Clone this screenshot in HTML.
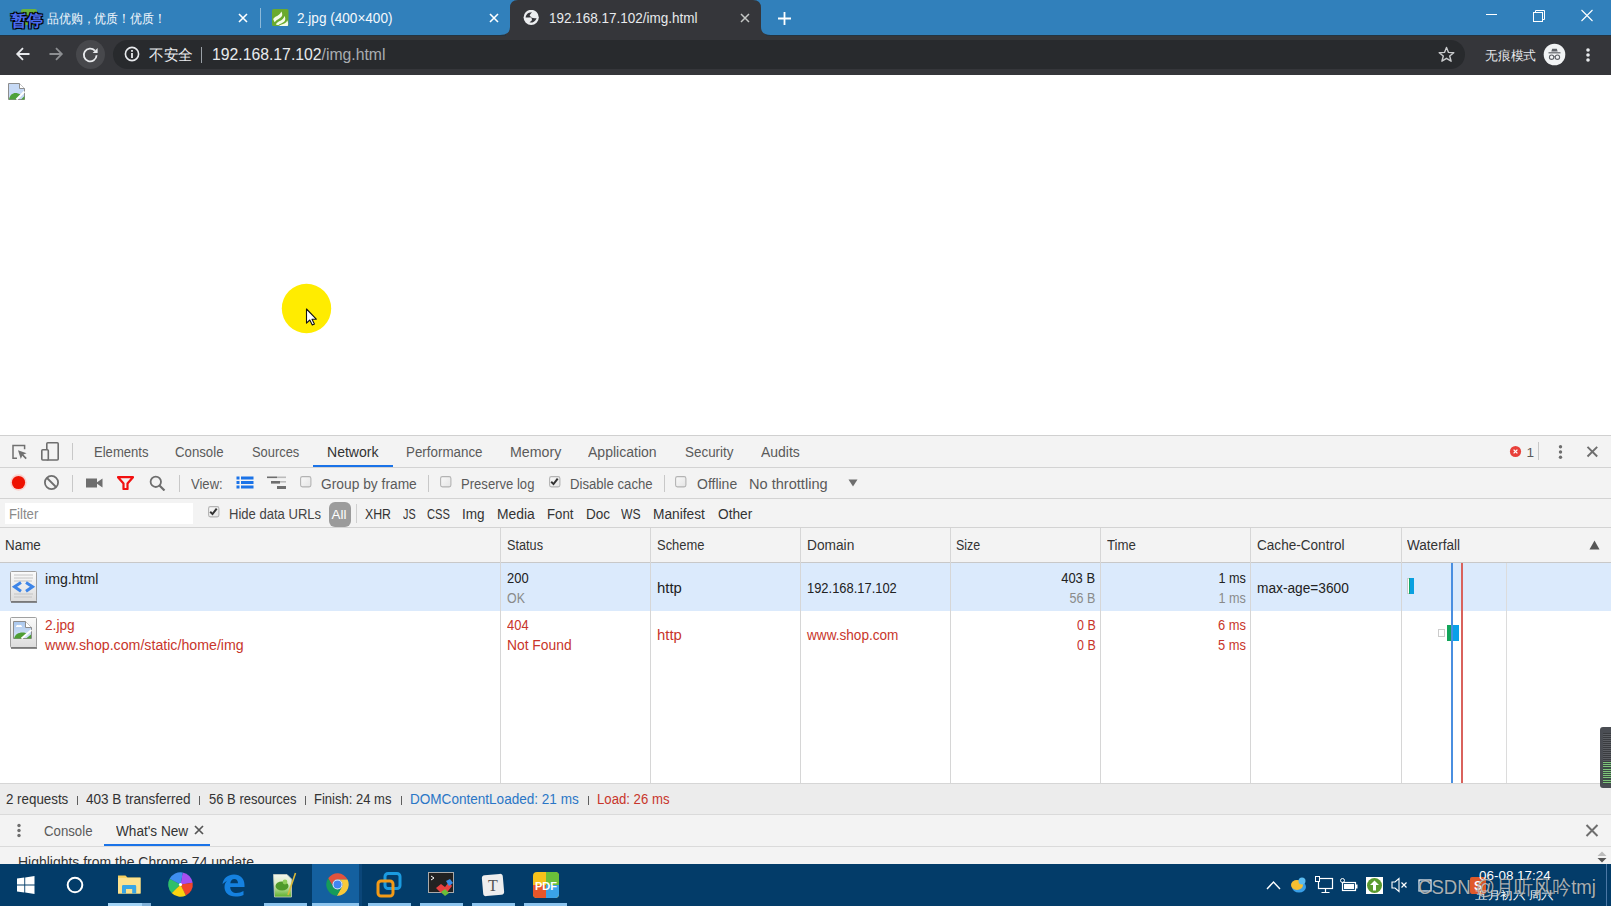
<!DOCTYPE html>
<html><head><meta charset="utf-8"><style>
html,body{margin:0;padding:0;width:1611px;height:906px;overflow:hidden;background:#fff;}
body{position:relative;font-family:"Liberation Sans",sans-serif;}
.t{position:absolute;white-space:pre;}
.r{position:absolute;display:block;}
</style></head><body>
<div class="r" style="left:0px;top:0px;width:1611px;height:35px;background:#3180bb;"></div>
<svg class="r" style="left:20px;top:8px;" width="18" height="18" viewBox="0 0 18 18"><rect x="1" y="1" width="16" height="16" rx="2" fill="#6cb33e"/></svg>
<div class="t" style="left:10.5px;top:13.26px;font-size:16px;line-height:16px;color:#4a6cf0;font-weight:bold;text-shadow:-1px -1px 0 #000,1px -1px 0 #000,-1px 1px 0 #000,1px 1px 0 #000,0 0 2px #000;">暂停</div>
<div class="t" style="left:46.5px;top:12.30px;font-size:13px;line-height:13px;color:#f4f8fb;transform:scaleX(0.9115);transform-origin:left center;">品优购，优质！优质！</div>
<svg class="r" style="left:237px;top:12px;" width="12" height="12" viewBox="0 0 12 12"><path d="M2 2L10 10M10 2L2 10" stroke="#fff" stroke-width="1.6"/></svg>
<div class="r" style="left:260px;top:8px;width:1px;height:20px;background:rgba(255,255,255,0.45);"></div>
<svg class="r" style="left:272px;top:9px;" width="17" height="17" viewBox="0 0 17 17"><rect x="0" y="0" width="16.5" height="17" rx="1.5" fill="#6aaa2e"/><path d="M1.2 10.2C2.5 7.5 6.5 7 8.2 4.5C8.8 3.6 9 3 9.2 2.4C10.5 4 10.6 6.2 9.6 7.6C8.4 9.5 5 10.5 2.6 13.2Z" fill="#f4fbe8"/><path d="M3.8 15.6C4.8 12.8 8.5 12.2 10.8 10C11.6 9.2 12.1 8.2 12.3 7C13.6 8.7 13.7 11 12.4 12.5C10.8 14.2 7.5 14.8 6.3 16.2Z" fill="#f4fbe8"/><path d="M6.8 17C8.5 15.6 12 15 14.2 13.2C14.8 12.6 15 12 15.1 11.3C16.2 12.7 16.4 15 15.8 17Z" fill="#f4fbe8"/></svg>
<div class="t" style="left:297px;top:11.62px;font-size:13.8px;line-height:13.8px;color:#f4f8fb;transform:scaleX(0.9841);transform-origin:left center;">2.jpg (400×400)</div>
<svg class="r" style="left:488px;top:12px;" width="12" height="12" viewBox="0 0 12 12"><path d="M2 2L10 10M10 2L2 10" stroke="#fff" stroke-width="1.6"/></svg>
<svg class="r" style="left:500px;top:0px;" width="272" height="35" viewBox="0 0 272 35"><path d="M0 35 Q10 35 10 27 L10 8 Q10 0 18 0 L253 0 Q261 0 261 8 L261 27 Q261 35 271 35 Z" fill="#35363a"/></svg>
<svg class="r" style="left:523px;top:10px;" width="16" height="16" viewBox="0 0 16 16"><circle cx="8.2" cy="7.4" r="7.6" fill="#eceef0"/><path d="M2.6 7.6C2.8 5.5 4 3.6 6 2.8C7 2.4 8 2.2 9 2.2C8 3.2 7.2 4 6.8 5C6.5 6 7.4 6.8 8.8 7.3C7 7.5 4.8 7.6 2.6 7.6Z" fill="#35363a"/><path d="M7.6 7.2C9 7.8 10.8 8.3 13.6 8.3C13 10 11.5 11.8 9.4 12.5C8.4 12.7 7.3 12.6 6.5 12.3C7.5 11.6 8.5 10.9 8.9 9.9C9.2 9 8.5 8 7.6 7.2Z" fill="#35363a"/></svg>
<div class="t" style="left:548.5px;top:11.62px;font-size:13.8px;line-height:13.8px;color:#e8eaed;transform:scaleX(0.9778);transform-origin:left center;">192.168.17.102/img.html</div>
<svg class="r" style="left:739px;top:12px;" width="12" height="12" viewBox="0 0 12 12"><path d="M2 2L10 10M10 2L2 10" stroke="#c4c7c5" stroke-width="1.5"/></svg>
<svg class="r" style="left:777px;top:11px;" width="15" height="15" viewBox="0 0 15 15"><path d="M7.5 1V14M1 7.5H14" stroke="#fff" stroke-width="1.8"/></svg>
<div class="r" style="left:1486px;top:14px;width:11px;height:1px;background:#fff;"></div>
<svg class="r" style="left:1532px;top:9px;" width="14" height="13" viewBox="0 0 14 13"><rect x="1.5" y="3.5" width="9" height="9" fill="none" stroke="#fff" stroke-width="1"/><path d="M3.5 3.5V1.5H12.5V10.5H10.5" fill="none" stroke="#fff" stroke-width="1"/></svg>
<svg class="r" style="left:1580px;top:9px;" width="14" height="13" viewBox="0 0 14 13"><path d="M1.5 1L12.5 12M12.5 1L1.5 12" stroke="#fff" stroke-width="1.1"/></svg>
<div class="r" style="left:0px;top:35px;width:1611px;height:40px;background:#35363a;"></div>
<svg class="r" style="left:15px;top:46px;" width="16" height="16" viewBox="0 0 16 16"><path d="M14.5 8H2.5M8 2.2L2.2 8L8 13.8" fill="none" stroke="#e8eaed" stroke-width="1.8"/></svg>
<svg class="r" style="left:48px;top:46px;" width="16" height="16" viewBox="0 0 16 16"><path d="M1.5 8H13.5M8 2.2L13.8 8L8 13.8" fill="none" stroke="#8d8f92" stroke-width="1.8"/></svg>
<svg class="r" style="left:76px;top:39.5px;" width="30" height="30" viewBox="0 0 30 30"><circle cx="14.5" cy="14.5" r="14.5" fill="#47484c"/><path d="M18.9 10.6A6.4 6.4 0 1 0 20.6 15.3" fill="none" stroke="#e8eaed" stroke-width="1.8"/><path d="M21.6 8V13H16.6Z" fill="#e8eaed"/></svg>
<div class="r" style="left:113px;top:40px;width:1352px;height:29px;background:#282a2d;border-radius:14.5px;"></div>
<div class="r" style="left:0px;top:35px;width:506px;height:1px;background:#243441;"></div>
<div class="r" style="left:766px;top:35px;width:845px;height:1px;background:#243441;"></div>
<svg class="r" style="left:124px;top:46px;" width="16" height="16" viewBox="0 0 16 16"><circle cx="8" cy="8" r="6.6" fill="none" stroke="#e8eaed" stroke-width="1.6"/><rect x="7.1" y="7" width="1.8" height="5" fill="#e8eaed"/><rect x="7.1" y="4" width="1.8" height="1.8" fill="#e8eaed"/></svg>
<div class="t" style="left:148.5px;top:48.44px;font-size:14.6px;line-height:14.6px;color:#e8eaed;transform:scaleX(0.9778);transform-origin:left center;">不安全</div>
<div class="r" style="left:201px;top:47px;width:1px;height:16px;background:#9aa0a6;"></div>
<div class="t" style="left:212px;top:47.06px;font-size:16px;line-height:16px;color:#e8eaed;transform:scaleX(0.9851);transform-origin:left center;">192.168.17.102<span style="color:#a9adb1">/img.html</span></div>
<svg class="r" style="left:1438px;top:46px;" width="17" height="17" viewBox="0 0 17 17"><path d="M8.5 1.5L10.5 6.4L15.8 6.7L11.7 10L13.1 15.2L8.5 12.3L3.9 15.2L5.3 10L1.2 6.7L6.5 6.4Z" fill="none" stroke="#c9cbcd" stroke-width="1.4" stroke-linejoin="round"/></svg>
<div class="t" style="left:1484.5px;top:49.96px;font-size:12.8px;line-height:12.8px;color:#e8eaed;transform:scaleX(0.9808);transform-origin:left center;">无痕模式</div>
<svg class="r" style="left:1543px;top:43px;" width="23" height="23" viewBox="0 0 23 23"><circle cx="11.5" cy="11.5" r="10.8" fill="#f1f3f4"/><path d="M8.3 8.6L9.2 5.8H13.8L14.7 8.6Z" fill="#5f6368"/><rect x="5.5" y="9.2" width="12" height="1.2" fill="#5f6368"/><circle cx="8.6" cy="14.2" r="2.2" fill="none" stroke="#5f6368" stroke-width="1.1"/><circle cx="14.4" cy="14.2" r="2.2" fill="none" stroke="#5f6368" stroke-width="1.1"/><path d="M10.8 14Q11.5 13.4 12.2 14" fill="none" stroke="#5f6368" stroke-width="1"/></svg>
<svg class="r" style="left:1585px;top:47px;" width="6" height="16" viewBox="0 0 6 16"><circle cx="3" cy="3" r="1.8" fill="#e8eaed"/><circle cx="3" cy="8" r="1.8" fill="#e8eaed"/><circle cx="3" cy="13" r="1.8" fill="#e8eaed"/></svg>
<div class="r" style="left:0px;top:75px;width:1611px;height:361px;background:#fff;"></div>
<svg class="r" style="left:8px;top:83px;" width="18" height="18" viewBox="0 0 18 18"><path d="M0.5 0.5H11.5L16.5 5.5V16.5H0.5Z" fill="#c6d9f5" stroke="#8d8d8d"/><path d="M1 16.5C2 11 6 9 10 10.5L13 11.5L8 16.5Z" fill="#4ea13a"/><path d="M8.5 16.5L16.5 8.5" stroke="#fff" stroke-width="2"/><path d="M13 16.5L16.5 13V16.5Z" fill="#4ea13a"/><path d="M11.5 0.5V5.5H16.5" fill="#fff" stroke="#8d8d8d"/></svg>
<svg class="r" style="left:281px;top:283px;" width="51" height="51" viewBox="0 0 51 51"><circle cx="25.5" cy="25.5" r="24.7" fill="#ffec00"/><path d="M25.5 26V40.2L28.8 37L31.3 42L33.4 41.1L31 36.2H35.3Z" fill="#fff" stroke="#111" stroke-width="1.1" stroke-linejoin="round"/></svg>
<div class="r" style="left:0px;top:436px;width:1611px;height:428px;background:#f3f3f3;"></div>
<div class="r" style="left:0px;top:435px;width:1611px;height:1px;background:#d0d0d0;"></div>
<div class="r" style="left:0px;top:467px;width:1611px;height:1px;background:#d3d3d3;"></div>
<svg class="r" style="left:11px;top:443px;" width="17" height="17" viewBox="0 0 17 17"><path d="M6 15.2H2V2.4H13.6V6.3" fill="none" stroke="#707070" stroke-width="1.5"/><path d="M7 7.2L15.6 10.3L12.4 11.6L15.8 15L14.6 16.2L11.2 12.8L9.8 16Z" fill="#707070"/></svg>
<svg class="r" style="left:40px;top:442px;" width="20" height="19" viewBox="0 0 20 19"><rect x="6.8" y="0.8" width="11.4" height="17.2" rx="1" fill="none" stroke="#6e6e6e" stroke-width="1.6"/><rect x="1.8" y="7.8" width="6.5" height="10.2" rx="1" fill="#f3f3f3" stroke="#6e6e6e" stroke-width="1.6"/></svg>
<div class="r" style="left:72px;top:443px;width:1px;height:17px;background:#c8c8c8;"></div>
<div class="t" style="left:93.5px;top:446.12px;font-size:13.8px;line-height:13.8px;color:#5a5a5a;transform:scaleX(0.9476);transform-origin:left center;">Elements</div>
<div class="t" style="left:175px;top:446.12px;font-size:13.8px;line-height:13.8px;color:#5a5a5a;transform:scaleX(0.9580);transform-origin:left center;">Console</div>
<div class="t" style="left:251.5px;top:446.12px;font-size:13.8px;line-height:13.8px;color:#5a5a5a;transform:scaleX(0.9343);transform-origin:left center;">Sources</div>
<div class="t" style="left:326.5px;top:446.12px;font-size:13.8px;line-height:13.8px;color:#333;transform:scaleX(1.0176);transform-origin:left center;">Network</div>
<div class="t" style="left:406px;top:446.12px;font-size:13.8px;line-height:13.8px;color:#5a5a5a;transform:scaleX(0.9685);transform-origin:left center;">Performance</div>
<div class="t" style="left:509.7px;top:446.12px;font-size:13.8px;line-height:13.8px;color:#5a5a5a;transform:scaleX(1.0295);transform-origin:left center;">Memory</div>
<div class="t" style="left:588.3px;top:446.12px;font-size:13.8px;line-height:13.8px;color:#5a5a5a;transform:scaleX(1.0163);transform-origin:left center;">Application</div>
<div class="t" style="left:684.6px;top:446.12px;font-size:13.8px;line-height:13.8px;color:#5a5a5a;transform:scaleX(0.9730);transform-origin:left center;">Security</div>
<div class="t" style="left:761.1px;top:446.12px;font-size:13.8px;line-height:13.8px;color:#5a5a5a;transform:scaleX(1.0115);transform-origin:left center;">Audits</div>
<div class="r" style="left:313px;top:465px;width:80px;height:2px;background:#1a73e8;"></div>
<svg class="r" style="left:1509px;top:445px;" width="13" height="13" viewBox="0 0 13 13"><circle cx="6.5" cy="6.5" r="5.6" fill="#e8403a"/><path d="M4.6 4.6L8.4 8.4M8.4 4.6L4.6 8.4" stroke="#fff" stroke-width="1.3"/></svg>
<div class="t" style="left:1526.5px;top:446.29px;font-size:13.6px;line-height:13.6px;color:#5a5a5a;">1</div>
<div class="r" style="left:1538px;top:442px;width:1px;height:18px;background:#c8c8c8;"></div>
<svg class="r" style="left:1557px;top:444px;" width="7" height="17" viewBox="0 0 7 17"><circle cx="3.5" cy="2.8" r="1.7" fill="#6e6e6e"/><circle cx="3.5" cy="8" r="1.7" fill="#6e6e6e"/><circle cx="3.5" cy="13.2" r="1.7" fill="#6e6e6e"/></svg>
<svg class="r" style="left:1585px;top:445px;" width="14" height="13" viewBox="0 0 14 13"><path d="M2.5 1.8L12.2 11.5M12.2 1.8L2.5 11.5" stroke="#6e6e6e" stroke-width="1.9"/></svg>
<div class="r" style="left:0px;top:498px;width:1611px;height:1px;background:#d3d3d3;"></div>
<svg class="r" style="left:10px;top:474px;" width="17" height="17" viewBox="0 0 17 17"><circle cx="8.5" cy="8.5" r="8.2" fill="#ffb0a8" opacity=".5"/><circle cx="8.5" cy="8.5" r="6.6" fill="#ee1100"/></svg>
<svg class="r" style="left:43px;top:474px;" width="17" height="17" viewBox="0 0 17 17"><circle cx="8.5" cy="8.5" r="6.6" fill="none" stroke="#6e6e6e" stroke-width="1.8"/><path d="M4 4L13 13" stroke="#6e6e6e" stroke-width="1.8"/></svg>
<div class="r" style="left:72px;top:475px;width:1px;height:17px;background:#c8c8c8;"></div>
<svg class="r" style="left:86px;top:478px;" width="17" height="10" viewBox="0 0 17 10"><rect x="0" y="0.5" width="11" height="9" fill="#6e6e6e"/><path d="M10 5L16.5 0.5V9.5Z" fill="#6e6e6e"/></svg>
<svg class="r" style="left:117px;top:476px;" width="17" height="14" viewBox="0 0 17 14"><path d="M1 1.2H16L10.5 7.5V13H6.5V7.5Z" fill="none" stroke="#f21010" stroke-width="2.2" stroke-linejoin="round"/></svg>
<svg class="r" style="left:149px;top:475px;" width="17" height="16" viewBox="0 0 17 16"><circle cx="6.8" cy="6.8" r="5.2" fill="none" stroke="#6e6e6e" stroke-width="1.8"/><path d="M10.5 10.5L15.5 15.5" stroke="#6e6e6e" stroke-width="2.2"/></svg>
<div class="r" style="left:179px;top:475px;width:1px;height:17px;background:#c8c8c8;"></div>
<div class="t" style="left:191px;top:478.42px;font-size:13.8px;line-height:13.8px;color:#5a5a5a;transform:scaleX(0.9463);transform-origin:left center;">View:</div>
<svg class="r" style="left:236px;top:476px;" width="18" height="13" viewBox="0 0 18 13"><rect x="0.5" y="0.5" width="3" height="3" fill="#1a73e8"/><rect x="5" y="0.5" width="12.5" height="3" fill="#1a73e8"/><rect x="0.5" y="5" width="3" height="3" fill="#1a73e8"/><rect x="5" y="5" width="12.5" height="3" fill="#1a73e8"/><rect x="0.5" y="9.5" width="3" height="3" fill="#1a73e8"/><rect x="5" y="9.5" width="12.5" height="3" fill="#1a73e8"/></svg>
<svg class="r" style="left:267px;top:476px;" width="20" height="14" viewBox="0 0 20 14"><rect x="0" y="0.5" width="10" height="1.6" fill="#6e6e6e"/><rect x="10" y="0.5" width="9" height="1.6" fill="#bbb"/><rect x="4" y="5" width="9" height="2.6" fill="#6e6e6e"/><rect x="13" y="5" width="6" height="1.6" fill="#bbb"/><rect x="10" y="10" width="9" height="3" fill="#6e6e6e"/></svg>
<svg class="r" style="left:300px;top:476px;" width="12" height="12" viewBox="0 0 12 12"><defs><linearGradient id="cbg" x1="0" y1="0" x2="1" y2="1"><stop offset="0" stop-color="#fafafa"/><stop offset="1" stop-color="#e4e4e4"/></linearGradient></defs><rect x="0.6" y="0.6" width="10.3" height="10.3" rx="1.8" fill="url(#cbg)" stroke="#b3b3b3" stroke-width="1.1"/></svg>
<div class="t" style="left:320.8px;top:478.42px;font-size:13.8px;line-height:13.8px;color:#5a5a5a;transform:scaleX(0.9994);transform-origin:left center;">Group by frame</div>
<div class="r" style="left:428px;top:475px;width:1px;height:17px;background:#c8c8c8;"></div>
<svg class="r" style="left:440px;top:476px;" width="12" height="12" viewBox="0 0 12 12"><defs><linearGradient id="cbg" x1="0" y1="0" x2="1" y2="1"><stop offset="0" stop-color="#fafafa"/><stop offset="1" stop-color="#e4e4e4"/></linearGradient></defs><rect x="0.6" y="0.6" width="10.3" height="10.3" rx="1.8" fill="url(#cbg)" stroke="#b3b3b3" stroke-width="1.1"/></svg>
<div class="t" style="left:461.4px;top:478.42px;font-size:13.8px;line-height:13.8px;color:#5a5a5a;transform:scaleX(0.9477);transform-origin:left center;">Preserve log</div>
<svg class="r" style="left:549px;top:476px;" width="12" height="12" viewBox="0 0 12 12"><defs><linearGradient id="cbg" x1="0" y1="0" x2="1" y2="1"><stop offset="0" stop-color="#fafafa"/><stop offset="1" stop-color="#e4e4e4"/></linearGradient></defs><rect x="0.6" y="0.6" width="10.3" height="10.3" rx="1.8" fill="url(#cbg)" stroke="#b3b3b3" stroke-width="1.1"/><path d="M2.2 5.8L4.5 8.1L8.7 2.6" fill="none" stroke="#333" stroke-width="2"/></svg>
<div class="t" style="left:569.7px;top:478.42px;font-size:13.8px;line-height:13.8px;color:#5a5a5a;transform:scaleX(0.9530);transform-origin:left center;">Disable cache</div>
<div class="r" style="left:664px;top:475px;width:1px;height:17px;background:#c8c8c8;"></div>
<svg class="r" style="left:675px;top:476px;" width="12" height="12" viewBox="0 0 12 12"><defs><linearGradient id="cbg" x1="0" y1="0" x2="1" y2="1"><stop offset="0" stop-color="#fafafa"/><stop offset="1" stop-color="#e4e4e4"/></linearGradient></defs><rect x="0.6" y="0.6" width="10.3" height="10.3" rx="1.8" fill="url(#cbg)" stroke="#b3b3b3" stroke-width="1.1"/></svg>
<div class="t" style="left:696.8px;top:478.42px;font-size:13.8px;line-height:13.8px;color:#5a5a5a;transform:scaleX(1.0141);transform-origin:left center;">Offline</div>
<div class="t" style="left:749.4px;top:478.42px;font-size:13.8px;line-height:13.8px;color:#5a5a5a;transform:scaleX(1.0566);transform-origin:left center;">No throttling</div>
<svg class="r" style="left:848px;top:479px;" width="10" height="8" viewBox="0 0 10 8"><path d="M0.5 0.5H9.5L5 7.5Z" fill="#6e6e6e"/></svg>
<div class="r" style="left:0px;top:527px;width:1611px;height:1px;background:#d3d3d3;"></div>
<div class="r" style="left:5px;top:503px;width:188px;height:21px;background:#fff;"></div>
<div class="t" style="left:8.5px;top:507.82px;font-size:13.8px;line-height:13.8px;color:#8a8a8a;transform:scaleX(0.9553);transform-origin:left center;">Filter</div>
<svg class="r" style="left:208px;top:506px;" width="12" height="12" viewBox="0 0 12 12"><defs><linearGradient id="cbg" x1="0" y1="0" x2="1" y2="1"><stop offset="0" stop-color="#fafafa"/><stop offset="1" stop-color="#e4e4e4"/></linearGradient></defs><rect x="0.6" y="0.6" width="10.3" height="10.3" rx="1.8" fill="url(#cbg)" stroke="#b3b3b3" stroke-width="1.1"/><path d="M2.2 5.8L4.5 8.1L8.7 2.6" fill="none" stroke="#333" stroke-width="2"/></svg>
<div class="t" style="left:229px;top:507.82px;font-size:13.8px;line-height:13.8px;color:#444;transform:scaleX(0.9455);transform-origin:left center;">Hide data URLs</div>
<div class="r" style="left:329px;top:502px;width:22px;height:25px;background:#9b9b9b;border-radius:6px;"></div>
<div class="t" style="left:331.5px;top:508.16px;font-size:13.4px;line-height:13.4px;color:#fff;">All</div>
<div class="r" style="left:356px;top:504px;width:1px;height:19px;background:#d0d0d0;"></div>
<div class="t" style="left:365px;top:507.82px;font-size:13.8px;line-height:13.8px;color:#333;transform:scaleX(0.8922);transform-origin:left center;">XHR</div>
<div class="t" style="left:403px;top:507.82px;font-size:13.8px;line-height:13.8px;color:#333;transform:scaleX(0.7822);transform-origin:left center;">JS</div>
<div class="t" style="left:427px;top:507.82px;font-size:13.8px;line-height:13.8px;color:#333;transform:scaleX(0.8106);transform-origin:left center;">CSS</div>
<div class="t" style="left:462px;top:507.82px;font-size:13.8px;line-height:13.8px;color:#333;transform:scaleX(0.9826);transform-origin:left center;">Img</div>
<div class="t" style="left:497px;top:507.82px;font-size:13.8px;line-height:13.8px;color:#333;transform:scaleX(1.0059);transform-origin:left center;">Media</div>
<div class="t" style="left:547.3px;top:507.82px;font-size:13.8px;line-height:13.8px;color:#333;transform:scaleX(0.9562);transform-origin:left center;">Font</div>
<div class="t" style="left:585.5px;top:507.82px;font-size:13.8px;line-height:13.8px;color:#333;transform:scaleX(0.9818);transform-origin:left center;">Doc</div>
<div class="t" style="left:621.4px;top:507.82px;font-size:13.8px;line-height:13.8px;color:#333;transform:scaleX(0.8815);transform-origin:left center;">WS</div>
<div class="t" style="left:653.4px;top:507.82px;font-size:13.8px;line-height:13.8px;color:#333;transform:scaleX(0.9951);transform-origin:left center;">Manifest</div>
<div class="t" style="left:717.6px;top:507.82px;font-size:13.8px;line-height:13.8px;color:#333;transform:scaleX(0.9909);transform-origin:left center;">Other</div>
<div class="r" style="left:0px;top:528px;width:1611px;height:34px;background:#f3f3f3;"></div>
<div class="r" style="left:0px;top:562px;width:1611px;height:1px;background:#c8c8c8;"></div>
<div class="t" style="left:5px;top:539.12px;font-size:13.8px;line-height:13.8px;color:#333;transform:scaleX(0.9725);transform-origin:left center;">Name</div>
<div class="t" style="left:506.6px;top:539.12px;font-size:13.8px;line-height:13.8px;color:#333;transform:scaleX(0.9201);transform-origin:left center;">Status</div>
<div class="t" style="left:656.5px;top:539.12px;font-size:13.8px;line-height:13.8px;color:#333;transform:scaleX(0.9383);transform-origin:left center;">Scheme</div>
<div class="t" style="left:806.9px;top:539.12px;font-size:13.8px;line-height:13.8px;color:#333;transform:scaleX(0.9948);transform-origin:left center;">Domain</div>
<div class="t" style="left:955.5px;top:539.12px;font-size:13.8px;line-height:13.8px;color:#333;transform:scaleX(0.9015);transform-origin:left center;">Size</div>
<div class="t" style="left:1106.5px;top:539.12px;font-size:13.8px;line-height:13.8px;color:#333;transform:scaleX(0.9617);transform-origin:left center;">Time</div>
<div class="t" style="left:1256.5px;top:539.12px;font-size:13.8px;line-height:13.8px;color:#333;transform:scaleX(0.9837);transform-origin:left center;">Cache-Control</div>
<div class="t" style="left:1407.3px;top:539.12px;font-size:13.8px;line-height:13.8px;color:#333;transform:scaleX(0.9829);transform-origin:left center;">Waterfall</div>
<svg class="r" style="left:1589px;top:540px;" width="11" height="10" viewBox="0 0 11 10"><path d="M0.5 9.5H10.5L5.5 0.5Z" fill="#555"/></svg>
<div class="r" style="left:0px;top:563px;width:1611px;height:220px;background:#fff;"></div>
<div class="r" style="left:0px;top:563px;width:1611px;height:48px;background:#dbeafc;"></div>
<div class="r" style="left:500px;top:528px;width:1px;height:255px;background:#d6d6d6;"></div>
<div class="r" style="left:650px;top:528px;width:1px;height:255px;background:#d6d6d6;"></div>
<div class="r" style="left:800px;top:528px;width:1px;height:255px;background:#d6d6d6;"></div>
<div class="r" style="left:950px;top:528px;width:1px;height:255px;background:#d6d6d6;"></div>
<div class="r" style="left:1100px;top:528px;width:1px;height:255px;background:#d6d6d6;"></div>
<div class="r" style="left:1250px;top:528px;width:1px;height:255px;background:#d6d6d6;"></div>
<div class="r" style="left:1401px;top:528px;width:1px;height:255px;background:#d6d6d6;"></div>
<div class="r" style="left:1506px;top:563px;width:1px;height:220px;background:#dcdcdc;"></div>
<svg class="r" style="left:10px;top:571px;" width="28" height="33" viewBox="0 0 28 33"><defs><linearGradient id="g1" x1="0" y1="0" x2="0" y2="1"><stop offset="0" stop-color="#fbfbfb"/><stop offset="1" stop-color="#dcdcdc"/></linearGradient></defs><rect x="0.5" y="0.5" width="26" height="30" rx="1" fill="url(#g1)" stroke="#a0a0a0"/><path d="M1 31H27" stroke="#707070" stroke-width="1.6"/><path d="M4 4H23M4 7H23M4 10H22M4 23H23M4 26H22" stroke="#c4c4c4" stroke-width="1"/><path d="M11 11.5L4.5 15.8L11 20.2M16 11.5L22.5 15.8L16 20.2" fill="none" stroke="#3d85e8" stroke-width="3"/></svg>
<div class="t" style="left:45px;top:573.12px;font-size:13.8px;line-height:13.8px;color:#222;transform:scaleX(1.0242);transform-origin:left center;">img.html</div>
<div class="t" style="left:506.5px;top:572.12px;font-size:13.8px;line-height:13.8px;color:#222;transform:scaleX(0.9379);transform-origin:left center;">200</div>
<div class="t" style="left:506.5px;top:591.72px;font-size:13.8px;line-height:13.8px;color:#8a8a8a;transform:scaleX(0.8978);transform-origin:left center;">OK</div>
<div class="t" style="left:656.5px;top:581.62px;font-size:13.8px;line-height:13.8px;color:#222;transform:scaleX(1.0775);transform-origin:left center;">http</div>
<div class="t" style="left:806.9px;top:581.62px;font-size:13.8px;line-height:13.8px;color:#222;transform:scaleX(0.9363);transform-origin:left center;">192.168.17.102</div>
<div class="t" style="right:515.5px;top:572.12px;font-size:13.8px;line-height:13.8px;color:#222;transform:scaleX(0.9400);transform-origin:right center;">403 B</div>
<div class="t" style="right:515.5px;top:592.12px;font-size:13.8px;line-height:13.8px;color:#8a8a8a;transform:scaleX(0.9088);transform-origin:right center;">56 B</div>
<div class="t" style="right:365.5px;top:572.12px;font-size:13.8px;line-height:13.8px;color:#222;transform:scaleX(0.9162);transform-origin:right center;">1 ms</div>
<div class="t" style="right:365.5px;top:592.12px;font-size:13.8px;line-height:13.8px;color:#8a8a8a;transform:scaleX(0.9162);transform-origin:right center;">1 ms</div>
<div class="t" style="left:1256.5px;top:581.62px;font-size:13.8px;line-height:13.8px;color:#222;transform:scaleX(0.9931);transform-origin:left center;">max-age=3600</div>
<svg class="r" style="left:10px;top:617px;" width="28" height="33" viewBox="0 0 28 33"><defs><linearGradient id="g2" x1="0" y1="0" x2="0" y2="1"><stop offset="0" stop-color="#fbfbfb"/><stop offset="1" stop-color="#dcdcdc"/></linearGradient><linearGradient id="sky" x1="0" y1="0" x2="0" y2="1"><stop offset="0" stop-color="#a9c7ee"/><stop offset="1" stop-color="#d6e4f7"/></linearGradient></defs><rect x="0.5" y="0.5" width="26" height="30" rx="1" fill="url(#g2)" stroke="#a0a0a0"/><path d="M1 31H27" stroke="#707070" stroke-width="1.6"/><path d="M3.5 4.5H15.5L21.5 10.5V21.5H3.5Z" fill="url(#sky)" stroke="#8c8c8c"/><path d="M15.5 4.5V10.5H21.5" fill="#fff" stroke="#8c8c8c"/><path d="M6 10C6 8 8 7.5 9 8.5C10 7.5 12 8 12 10Z" fill="#fff"/><path d="M4 21.5C5 17 9 15 14 15.5L17 16.5L12 21.5Z" fill="#4e9e35"/><path d="M11.5 21.5L21.5 13" stroke="#fff" stroke-width="1.8"/><path d="M16 21.5L21 17.5V21.5Z" fill="#4e9e35"/></svg>
<div class="t" style="left:45px;top:619.12px;font-size:13.8px;line-height:13.8px;color:#c8352b;transform:scaleX(0.9926);transform-origin:left center;">2.jpg</div>
<div class="t" style="left:45px;top:638.52px;font-size:13.8px;line-height:13.8px;color:#c8352b;transform:scaleX(1.0283);transform-origin:left center;">www.shop.com/static/home/img</div>
<div class="t" style="left:506.5px;top:619.12px;font-size:13.8px;line-height:13.8px;color:#c8352b;transform:scaleX(0.9379);transform-origin:left center;">404</div>
<div class="t" style="left:506.5px;top:639.12px;font-size:13.8px;line-height:13.8px;color:#c8352b;transform:scaleX(1.0025);transform-origin:left center;">Not Found</div>
<div class="t" style="left:656.5px;top:628.72px;font-size:13.8px;line-height:13.8px;color:#c8352b;transform:scaleX(1.0775);transform-origin:left center;">http</div>
<div class="t" style="left:806.9px;top:628.72px;font-size:13.8px;line-height:13.8px;color:#c8352b;transform:scaleX(0.9851);transform-origin:left center;">www.shop.com</div>
<div class="t" style="right:515.5px;top:619.12px;font-size:13.8px;line-height:13.8px;color:#c8352b;transform:scaleX(0.9026);transform-origin:right center;">0 B</div>
<div class="t" style="right:515.5px;top:639.12px;font-size:13.8px;line-height:13.8px;color:#c8352b;transform:scaleX(0.9026);transform-origin:right center;">0 B</div>
<div class="t" style="right:365.5px;top:619.12px;font-size:13.8px;line-height:13.8px;color:#c8352b;transform:scaleX(0.9363);transform-origin:right center;">6 ms</div>
<div class="t" style="right:365.5px;top:639.12px;font-size:13.8px;line-height:13.8px;color:#c8352b;transform:scaleX(0.9363);transform-origin:right center;">5 ms</div>
<div class="r" style="left:1408px;top:579px;width:2px;height:14px;background:#ffffff;outline:1px solid #ccc;"></div>
<div class="r" style="left:1409px;top:578px;width:4px;height:16px;background:#0aa0e0;border-left:1px solid #13a86a;"></div>
<div class="r" style="left:1438px;top:629px;width:7px;height:8px;background:#fff;border:1px solid #ccc;box-sizing:border-box;"></div>
<div class="r" style="left:1447px;top:625px;width:6px;height:16px;background:#12a55a;"></div>
<div class="r" style="left:1453px;top:625px;width:6px;height:16px;background:#0aa0e8;"></div>
<div class="r" style="left:1451px;top:563px;width:1.6px;height:220px;background:#4a8fe0;"></div>
<div class="r" style="left:1461.4px;top:563px;width:1.5px;height:220px;background:#d9625c;"></div>
<div class="r" style="left:0px;top:783px;width:1611px;height:1px;background:#d6d6d6;"></div>
<div class="r" style="left:0px;top:784px;width:1611px;height:30px;background:#ececec;"></div>
<div class="r" style="left:0px;top:814px;width:1611px;height:1.5px;background:#dadada;"></div>
<div class="t" style="left:6.3px;top:792.72px;font-size:13.8px;line-height:13.8px;color:#333;transform:scaleX(0.9668);transform-origin:left center;">2 requests</div>
<div class="r" style="left:77px;top:795.5px;width:1.2px;height:9.5px;background:#5e5e5e;"></div>
<div class="t" style="left:86px;top:792.72px;font-size:13.8px;line-height:13.8px;color:#333;transform:scaleX(0.9812);transform-origin:left center;">403 B transferred</div>
<div class="r" style="left:198.5px;top:795.5px;width:1.2px;height:9.5px;background:#5e5e5e;"></div>
<div class="t" style="left:208.5px;top:792.72px;font-size:13.8px;line-height:13.8px;color:#333;transform:scaleX(0.9429);transform-origin:left center;">56 B resources</div>
<div class="r" style="left:305px;top:795.5px;width:1.2px;height:9.5px;background:#5e5e5e;"></div>
<div class="t" style="left:314.3px;top:792.72px;font-size:13.8px;line-height:13.8px;color:#333;transform:scaleX(0.9434);transform-origin:left center;">Finish: 24 ms</div>
<div class="r" style="left:401px;top:795.5px;width:1.2px;height:9.5px;background:#5e5e5e;"></div>
<div class="t" style="left:410.3px;top:792.72px;font-size:13.8px;line-height:13.8px;color:#2a76c6;transform:scaleX(0.9820);transform-origin:left center;">DOMContentLoaded: 21 ms</div>
<div class="r" style="left:587.5px;top:795.5px;width:1.2px;height:9.5px;background:#5e5e5e;"></div>
<div class="t" style="left:597.2px;top:792.72px;font-size:13.8px;line-height:13.8px;color:#c8352b;transform:scaleX(0.9547);transform-origin:left center;">Load: 26 ms</div>
<div class="r" style="left:0px;top:815px;width:1611px;height:32px;background:#f3f3f3;"></div>
<svg class="r" style="left:16px;top:823px;" width="6" height="15" viewBox="0 0 6 15"><circle cx="3" cy="2.5" r="1.7" fill="#6e6e6e"/><circle cx="3" cy="7.5" r="1.7" fill="#6e6e6e"/><circle cx="3" cy="12.5" r="1.7" fill="#6e6e6e"/></svg>
<div class="t" style="left:43.7px;top:825.12px;font-size:13.8px;line-height:13.8px;color:#5a5a5a;transform:scaleX(0.9580);transform-origin:left center;">Console</div>
<div class="t" style="left:115.7px;top:825.12px;font-size:13.8px;line-height:13.8px;color:#333;transform:scaleX(0.9854);transform-origin:left center;">What's New</div>
<svg class="r" style="left:194px;top:825px;" width="10" height="10" viewBox="0 0 10 10"><path d="M1 1L9 9M9 1L1 9" stroke="#555" stroke-width="1.7"/></svg>
<div class="r" style="left:104px;top:843.5px;width:106px;height:2.5px;background:#1a73e8;"></div>
<div class="r" style="left:0px;top:846px;width:1611px;height:1.5px;background:#dadada;"></div>
<div class="r" style="left:0px;top:847px;width:1611px;height:17px;background:#f3f3f3;"></div>
<div class="t" style="left:18.3px;top:854.86px;font-size:14.1px;line-height:14.1px;color:#333;transform:scaleX(0.9909);transform-origin:left center;">Highlights from the Chrome 74 update</div>
<svg class="r" style="left:1585px;top:824px;" width="14" height="13" viewBox="0 0 14 13"><path d="M1.5 1L12.5 12M12.5 1L1.5 12" stroke="#6e6e6e" stroke-width="2"/></svg>
<svg class="r" style="left:1596px;top:850px;" width="12" height="14" viewBox="0 0 12 14"><path d="M1.5 6L6 1.5L10.5 6Z" fill="#bbb"/><path d="M1.5 8L10.5 8L6 12.5Z" fill="#555"/></svg>
<div class="r" style="left:1600px;top:727px;width:14px;height:61px;background:#4a4d53;border-radius:3px;"></div>
<div class="r" style="left:1603px;top:733px;width:8px;height:29px;background:repeating-linear-gradient(#3a3c40 0 1px, #5a5d62 1px 2px);"></div>
<div class="r" style="left:1603px;top:762px;width:8px;height:22px;background:repeating-linear-gradient(#7fc47a 0 1px, #3b4a45 1px 2.2px);"></div>
<div class="r" style="left:0px;top:864px;width:1611px;height:42px;background:#033c69;"></div>
<svg class="r" style="left:17px;top:876px;" width="18" height="18" viewBox="0 0 18 18"><path d="M0 2.5L7.3 1.5V8.4H0ZM8.2 1.4L17.5 0V8.4H8.2ZM0 9.4H7.3V16.4L0 15.4ZM8.2 9.4H17.5V18L8.2 16.6Z" fill="#fff"/></svg>
<svg class="r" style="left:66px;top:876px;" width="18" height="18" viewBox="0 0 18 18"><circle cx="9" cy="9" r="7.3" fill="none" stroke="#fff" stroke-width="2"/></svg>
<svg class="r" style="left:117px;top:874px;" width="24" height="21" viewBox="0 0 24 21"><path d="M1 1.5H8.5L10.5 3.5H23.5V19.5H1Z" fill="#f6cf5e"/><rect x="1" y="3.8" width="22.5" height="15.7" fill="#fde28e"/><path d="M5 19.5V12.2Q5 11 6.2 11H18Q19.2 11 19.2 12.2V19.5H15.2V15H9V19.5Z" fill="#39a6e6"/></svg>
<div class="r" style="left:108px;top:903px;width:34px;height:3px;background:#a3d4f6;"></div>
<div class="r" style="left:142px;top:903px;width:9px;height:3px;background:#7fb0d8;"></div>
<svg class="r" style="left:167px;top:871px;" width="27" height="27" viewBox="0 0 27 27"><path d="M13.5 13.5L15.64 1.39A12.3 12.3 0 0 1 25.68 11.79Q20.47 12.89 13.5 13.5Z" fill="#a64ef0"/><path d="M13.5 13.5L25.68 11.79A12.3 12.3 0 0 1 18.89 24.56Q16.24 19.94 13.5 13.5Z" fill="#f2452a"/><path d="M13.5 13.5L18.89 24.56A12.3 12.3 0 0 1 4.65 22.04Q8.22 18.09 13.5 13.5Z" fill="#fcd30f"/><path d="M13.5 13.5L4.65 22.04A12.3 12.3 0 0 1 2.64 7.73Q7.50 9.89 13.5 13.5Z" fill="#2fbf6a"/><path d="M13.5 13.5L2.64 7.73A12.3 12.3 0 0 1 15.64 1.39Q15.07 6.68 13.5 13.5Z" fill="#3f8ef0"/><circle cx="13.5" cy="13.5" r="1.6" fill="#fff"/></svg>
<svg class="r" style="left:222px;top:873px;" width="24" height="24" viewBox="0 0 24 24"><path d="M0.5 11C1.5 5 6 1.5 12 1.5C18.5 1.5 22.5 6 22.5 12V14H8.2C8.4 18 11 20 14.5 20C17 20 19.3 19.3 21.5 18V22C19.3 23 16.5 23.5 13.5 23.5C6.5 23.5 2.5 19.5 2.5 14C2.5 11 3.5 9 5.5 7.5C4 8.5 2.5 9.5 0.5 11ZM8.3 10.2H16C16 7.5 14.5 6 12.3 6C10 6 8.6 7.8 8.3 10.2Z" fill="#1581e0"/></svg>
<svg class="r" style="left:272px;top:872px;" width="25" height="26" viewBox="0 0 25 26"><defs><linearGradient id="npg" x1="0" y1="0" x2="0" y2="1"><stop offset="0" stop-color="#f2f5ee"/><stop offset="0.45" stop-color="#d9ecc0"/><stop offset="1" stop-color="#5cae2a"/></linearGradient></defs><path d="M1.5 2.5H15L19.5 7V25H2.5Z" fill="url(#npg)" stroke="#c9d0c0" stroke-width="0.8"/><ellipse cx="10" cy="14" rx="6.5" ry="4.5" fill="#4f9a2a"/><circle cx="13" cy="10" r="2.4" fill="#8fce5a"/><path d="M16 23L23.5 1" stroke="#d9b93a" stroke-width="1.6"/></svg>
<div class="r" style="left:312px;top:864px;width:47px;height:42px;background:#14609f;"></div>
<div class="r" style="left:359px;top:864px;width:3px;height:42px;background:#0b4679;"></div>
<svg class="r" style="left:324.5px;top:872px;" width="25" height="25" viewBox="0 0 25 25"><path d="M3.16 6.32A11.2 11.2 0 0 1 22.52 7.50L12.50 7.50A5.0 5.0 0 0 0 8.17 15.00Z" fill="#e0533d"/><path d="M22.52 7.50A11.2 11.2 0 0 1 11.82 23.68L16.83 15.00A5.0 5.0 0 0 0 12.50 7.50Z" fill="#f8c93a"/><path d="M11.82 23.68A11.2 11.2 0 0 1 3.16 6.32L8.17 15.00A5.0 5.0 0 0 0 16.83 15.00Z" fill="#169b5a"/><circle cx="12.5" cy="12.5" r="5.0" fill="#e8f0fa"/><circle cx="12.5" cy="12.5" r="4.0" fill="#4285f4"/></svg>
<div class="r" style="left:312px;top:903px;width:47px;height:3px;background:#8cc4ee;"></div>
<div class="r" style="left:264px;top:903px;width:43px;height:3px;background:#8cc4ee;"></div>
<svg class="r" style="left:376px;top:872px;" width="26" height="26" viewBox="0 0 26 26"><rect x="9" y="1.5" width="15" height="15" rx="3" fill="none" stroke="#1b9be0" stroke-width="3"/><rect x="2" y="9" width="15" height="15" rx="3" fill="none" stroke="#f39a16" stroke-width="3"/></svg>
<div class="r" style="left:368px;top:903px;width:43px;height:3px;background:#8cc4ee;"></div>
<svg class="r" style="left:428px;top:872px;" width="26" height="26" viewBox="0 0 26 26"><rect x="0.5" y="0.5" width="25" height="20" fill="#222" stroke="#aaa"/><path d="M3 4L6 6L3 8" stroke="#fff" fill="none" stroke-width="1"/><path d="M8 16L13 12L17 15L21 10L24 14L17 23L12 20Z" fill="#e84040"/><path d="M13 20L17 17L21 21L17 24Z" fill="#6bbf3a"/><path d="M18 9L22 7L25 11L21 14Z" fill="#3a8fe8"/></svg>
<div class="r" style="left:420px;top:903px;width:43px;height:3px;background:#8cc4ee;"></div>
<svg class="r" style="left:481px;top:873px;" width="24" height="24" viewBox="0 0 24 24"><rect x="1.5" y="1.5" width="21" height="21" rx="3" fill="#eeeeee" transform="rotate(-5 12 12)"/><text x="12" y="18" font-family="Liberation Serif" font-size="16" fill="#555" text-anchor="middle">T</text></svg>
<div class="r" style="left:472px;top:903px;width:43px;height:3px;background:#8cc4ee;"></div>
<svg class="r" style="left:533px;top:872px;" width="26" height="26" viewBox="0 0 26 26"><rect x="0" y="0" width="26" height="26" rx="4" fill="#f6c21a"/><path d="M13 0H22A4 4 0 0 1 26 4V13H13Z" fill="#6bbf3a"/><path d="M13 13H26V22A4 4 0 0 1 22 26H13Z" fill="#3aa3e8"/><path d="M0 13H13V26H4A4 4 0 0 1 0 22Z" fill="#e8562a"/><text x="13" y="17.5" font-family="Liberation Sans" font-size="11" font-weight="bold" fill="#fff" text-anchor="middle">PDF</text></svg>
<div class="r" style="left:524px;top:903px;width:43px;height:3px;background:#8cc4ee;"></div>
<svg class="r" style="left:1266px;top:880px;" width="15" height="10" viewBox="0 0 15 10"><path d="M1 9L7.5 2L14 9" fill="none" stroke="#fff" stroke-width="1.4"/></svg>
<svg class="r" style="left:1290px;top:876px;" width="17" height="17" viewBox="0 0 17 17"><ellipse cx="9" cy="11" rx="7" ry="5.5" fill="#3aa0e8"/><ellipse cx="7" cy="9" rx="6" ry="5" fill="#f5c030"/><circle cx="12" cy="5" r="3.5" fill="#5bbcf0"/></svg>
<svg class="r" style="left:1315px;top:876px;" width="19" height="18" viewBox="0 0 19 18"><rect x="3.5" y="2.5" width="14" height="10" fill="none" stroke="#fff" stroke-width="1.2"/><path d="M10.5 12.5V16M6.5 16.5H14.5" stroke="#fff" stroke-width="1.2"/><rect x="0.5" y="0.5" width="4" height="5" fill="#083a66" stroke="#fff"/></svg>
<svg class="r" style="left:1340px;top:878px;" width="18" height="14" viewBox="0 0 18 14"><rect x="2.5" y="4.5" width="13" height="8" fill="none" stroke="#fff" stroke-width="1.2"/><rect x="4" y="6" width="10" height="5" fill="#fff"/><rect x="15.5" y="6.5" width="2" height="4" fill="#fff"/><circle cx="2.5" cy="2.5" r="2" fill="none" stroke="#fff"/></svg>
<svg class="r" style="left:1366px;top:877px;" width="17" height="17" viewBox="0 0 17 17"><rect x="0" y="0" width="17" height="17" fill="#fff"/><circle cx="8.5" cy="8.5" r="7.5" fill="#5a9a2e"/><path d="M8.5 3.5L4 8H7V13.5H10V8H13Z" fill="#fff"/></svg>
<svg class="r" style="left:1391px;top:877px;" width="17" height="16" viewBox="0 0 17 16"><path d="M1 5H4L8 1.5V14.5L4 11H1Z" fill="none" stroke="#fff" stroke-width="1.1"/><path d="M10.5 5.5L15.5 10.5M15.5 5.5L10.5 10.5" stroke="#fff" stroke-width="1.2"/></svg>
<svg class="r" style="left:1418px;top:877px;" width="14" height="16" viewBox="0 0 14 16"><rect x="1" y="3" width="12" height="11" fill="none" stroke="#fff" stroke-width="1.2"/></svg>
<svg class="r" style="left:1470px;top:877px;" width="16" height="17" viewBox="0 0 16 17"><rect x="0" y="0" width="16" height="17" rx="2" fill="#e05a2a"/><text x="8" y="13" font-family="Liberation Sans" font-size="12" font-weight="bold" fill="#fff" text-anchor="middle">S</text></svg>
<div class="t" style="left:1478.7px;top:868.80px;font-size:13px;line-height:13px;color:#fff;transform:scaleX(1.0330);transform-origin:left center;">06-08 17:24</div>
<div class="t" style="left:1475px;top:889.73px;font-size:11.3px;line-height:11.3px;color:#fff;transform:scaleX(1.1426);transform-origin:left center;">五月初六 周六</div>
<div class="t" style="left:1418px;top:877.79px;font-size:19.5px;line-height:19.5px;color:rgba(225,225,225,0.75);text-shadow:0 0 1px rgba(0,0,0,.6);transform:scaleX(0.9546);transform-origin:left center;">CSDN @月听风吟tmj</div>
<div class="r" style="left:1606px;top:864px;width:1px;height:42px;background:#4b77a5;"></div>
</body></html>
